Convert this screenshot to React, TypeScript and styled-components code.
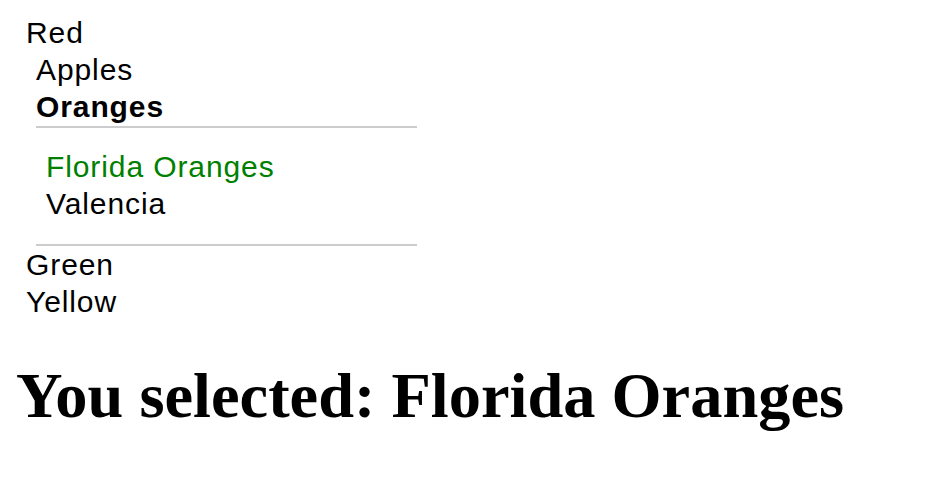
import React, { useState } from "react";
import styled, { createGlobalStyle } from "styled-components";

const Global = createGlobalStyle`
  html, body { margin: 0; padding: 0; background: #ffffff; }
  body { font-family: "Liberation Sans", Arial, sans-serif; color: #000; }
`;

const Page = styled.div`
  padding: 14px 16px 0 16px;
`;

const Menu = styled.div`
  padding-left: 10px;
  font-family: "Liberation Sans", Arial, Helvetica, sans-serif;
  font-size: 30px;
  line-height: 37px;
  letter-spacing: 0.9px;
`;

const SubList = styled.div`
  padding-left: 10px;
`;

const Item = styled.div<{ $active?: boolean; $selected?: boolean }>`
  font-weight: ${(p) => (p.$active ? 700 : 400)};
  color: ${(p) => (p.$selected ? "#008000" : "#000000")};
  cursor: pointer;
  white-space: nowrap;
`;

const Panel = styled.div`
  box-sizing: border-box;
  width: 381px;
  margin-top: 1px;
  padding: 20px 0 22px 10px;
  border-top: 2px solid #cccccc;
  border-bottom: 2px solid #cccccc;
`;

const Heading = styled.h1`
  margin: 40px 0 0 0;
  font-family: "Liberation Serif", "Times New Roman", serif;
  font-weight: 700;
  font-size: 64.4px;
  line-height: 72px;
`;

export default function App() {
  const [selected, setSelected] = useState("Florida Oranges");
  return (
    <>
      <Global />
      <Page>
        <Menu>
          <Item onClick={() => setSelected("Red")}>Red</Item>
          <SubList>
            <Item onClick={() => setSelected("Apples")}>Apples</Item>
            <Item $active>Oranges</Item>
            <Panel>
              {["Florida Oranges", "Valencia"].map((o) => (
                <Item key={o} $selected={selected === o} onClick={() => setSelected(o)}>
                  {o}
                </Item>
              ))}
            </Panel>
          </SubList>
          <Item onClick={() => setSelected("Green")}>Green</Item>
          <Item onClick={() => setSelected("Yellow")}>Yellow</Item>
        </Menu>
        <Heading>You selected: {selected}</Heading>
      </Page>
    </>
  );
}
